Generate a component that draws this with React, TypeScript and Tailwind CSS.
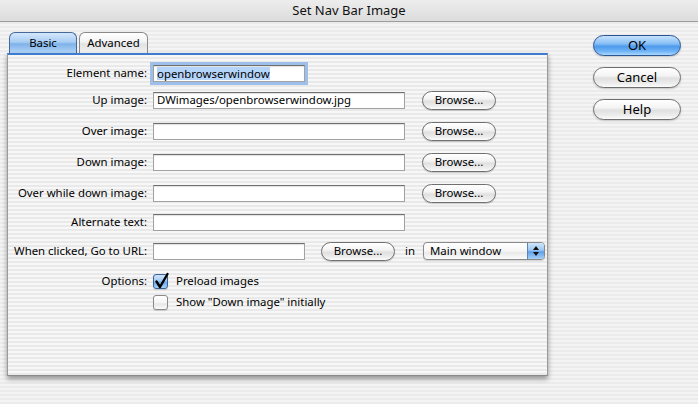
import React from "react";

const winStripe =
  "bg-[image:repeating-linear-gradient(180deg,#ebebeb_0px,#ebebeb_2px,#f4f4f4_2px,#f4f4f4_4px)]";

function Field({ w, children, focus }: { w: string; children?: React.ReactNode; focus?: boolean }) {
  return (
    <div
      className={`${w} h-[17px] bg-white border border-[#a2a2a2] border-t-[#6f6f6f] shadow-[inset_0_1px_1px_rgba(0,0,0,0.12)] flex items-center pl-[3px] leading-none ${
        focus ? "ring-[3px] ring-[#9dbfe9] border-[#7a9fd0]" : ""
      }`}
    >
      {children}
    </div>
  );
}

function AquaButton({ w, children, ml }: { w: string; children: React.ReactNode; ml?: string }) {
  return (
    <div
      className={`${w} ${ml ?? ""} h-[19px] rounded-full border border-[#707070] bg-[linear-gradient(180deg,#ffffff_0%,#f4f4f4_40%,#e0e0e0_55%,#ececec_80%,#fbfbfb_100%)] shadow-[0_1px_1px_rgba(0,0,0,0.18)] flex items-center justify-center text-[11.4px] leading-none`}
    >
      {children}
    </div>
  );
}

function Row({ label, children, mt, h = "h-[18px]" }: { label: string; children?: React.ReactNode; mt: string; h?: string }) {
  return (
    <div className={`flex items-center ${h} ${mt}`}>
      <div className="w-[139px] text-right whitespace-nowrap leading-none">{label}</div>
      <div className="ml-[6px] flex items-center">{children}</div>
    </div>
  );
}

function Checkbox({ checked }: { checked?: boolean }) {
  return (
    <div
      className={`relative w-[15px] h-[15px] rounded-[3px] border ${
        checked
          ? "border-[#3a6197] bg-[linear-gradient(180deg,#cfe5fb_0%,#a3cbf3_45%,#6aa9ea_55%,#a8d2f8_100%)]"
          : "border-[#8a8a8a] bg-[linear-gradient(180deg,#ffffff_0%,#f5f5f5_50%,#e6e6e6_60%,#fafafa_100%)]"
      } shadow-[0_1px_1px_rgba(0,0,0,0.15)]`}
    >
      {checked && (
        <svg className="absolute left-[-2px] top-[-5px]" width="20" height="21" viewBox="0 0 20 21">
          <path d="M4.5 11.5 L8 17 L15.5 4" fill="none" stroke="#000" strokeWidth="2.4" strokeLinecap="round" strokeLinejoin="round" />
        </svg>
      )}
    </div>
  );
}

function BigButton({ children, primary }: { children: React.ReactNode; primary?: boolean }) {
  return (
    <div
      className={`w-[88px] h-[21px] rounded-full border flex items-center justify-center text-[13px] leading-none shadow-[0_1px_2px_rgba(0,0,0,0.2)] ${
        primary
          ? "border-[#2b5592] bg-[linear-gradient(180deg,#c6e2fe_0%,#88bff5_40%,#4e9bec_55%,#6fb3f6_80%,#a9d8ff_100%)]"
          : "border-[#6e6e6e] bg-[linear-gradient(180deg,#ffffff_0%,#f4f4f4_40%,#e0e0e0_55%,#ececec_80%,#fbfbfb_100%)]"
      }`}
    >
      {children}
    </div>
  );
}

export default function App() {
  return (
    <div className="w-[698px] h-[404px] overflow-hidden flex flex-col font-['Noto_Sans',sans-serif] text-[11.4px] text-black">
      <div className="h-[22px] shrink-0 border-b border-[#9c9c9c] bg-[linear-gradient(180deg,#ededed,#dcdcdc)] flex items-center justify-center text-[13px] text-[#111] leading-none">
        Set Nav Bar Image
      </div>
      <div className={`flex-1 flex ${winStripe}`}>
        <div className="ml-[7px] mt-[10px] w-[541px] flex flex-col">
          <div className="flex h-[21px] pl-[2px] items-end gap-[2px]">
            <div className="w-[68px] h-[21px] rounded-t-[6px] border border-b-0 border-[#46699b] bg-[linear-gradient(180deg,#d4e7fb_0%,#a9cdf3_45%,#7fb2ea_55%,#b2d5f7_100%)] flex items-center justify-center leading-none">
              Basic
            </div>
            <div className="w-[69px] h-[21px] rounded-t-[6px] border border-b-0 border-[#8a8a8a] bg-[linear-gradient(180deg,#ffffff_0%,#f3f3f3_45%,#e2e2e2_55%,#f2f2f2_100%)] flex items-center justify-center leading-none">
              Advanced
            </div>
          </div>
          <div className="h-[323px] border-t-2 border-t-[#3f7cd0] border-x border-x-[#9a9a9a] border-b border-b-[#8a8a8a] bg-[image:repeating-linear-gradient(180deg,#f7f7f7_0px,#f7f7f7_2px,#e9e9e9_2px,#e9e9e9_4px)] shadow-[0_3px_5px_rgba(0,0,0,0.4)] flex flex-col">
            <Row label="Element name:" mt="mt-[9px]">
              <Field w="w-[152px]" focus>
                <span className="bg-[#b5d4fa] leading-[13px]">openbrowserwindow</span>
              </Field>
            </Row>
            <Row label="Up image:" mt="mt-[9px]">
              <Field w="w-[252px]">DWimages/openbrowserwindow.jpg</Field>
              <AquaButton w="w-[74px]" ml="ml-[17px]">Browse...</AquaButton>
            </Row>
            <Row label="Over image:" mt="mt-[13px]">
              <Field w="w-[252px]" />
              <AquaButton w="w-[74px]" ml="ml-[17px]">Browse...</AquaButton>
            </Row>
            <Row label="Down image:" mt="mt-[13px]">
              <Field w="w-[252px]" />
              <AquaButton w="w-[74px]" ml="ml-[17px]">Browse...</AquaButton>
            </Row>
            <Row label="Over while down image:" mt="mt-[13px]">
              <Field w="w-[252px]" />
              <AquaButton w="w-[74px]" ml="ml-[17px]">Browse...</AquaButton>
            </Row>
            <Row label="Alternate text:" mt="mt-[11px]">
              <Field w="w-[252px]" />
            </Row>
            <Row label="When clicked, Go to URL:" mt="mt-[11px]">
              <Field w="w-[152px]" />
              <AquaButton w="w-[74px]" ml="ml-[16px]">Browse...</AquaButton>
              <span className="ml-[10px] leading-none">in</span>
              <div className="ml-[8px] w-[122px] h-[18px] rounded-[4px] border border-[#8a8a8a] bg-[linear-gradient(180deg,#ffffff_0%,#f6f6f6_50%,#e9e9e9_60%,#fbfbfb_100%)] flex items-center shadow-[0_1px_1px_rgba(0,0,0,0.15)]">
                <span className="flex-1 pl-[6px] leading-none">Main window</span>
                <div className="w-[17px] h-full rounded-r-[3px] border-l border-[#5c84bb] bg-[linear-gradient(180deg,#d0e6fc_0%,#9cc7f2_45%,#5fa0e8_55%,#a6d0f8_100%)] flex flex-col items-center justify-center gap-[2px]">
                  <svg width="6" height="4" viewBox="0 0 6 4"><path d="M3 0 L6 4 L0 4 Z" fill="#111" /></svg>
                  <svg width="6" height="4" viewBox="0 0 6 4"><path d="M0 0 L6 0 L3 4 Z" fill="#111" /></svg>
                </div>
              </div>
            </Row>
            <Row label="Options:" mt="mt-[13px]" h="h-[16px]">
              <Checkbox checked />
              <span className="ml-[8px] leading-none">Preload images</span>
            </Row>
            <Row label="" mt="mt-[5px]" h="h-[16px]">
              <Checkbox />
              <span className="ml-[8px] leading-none">Show "Down image" initially</span>
            </Row>
          </div>
        </div>
        <div className="ml-[45px] mt-[13px] flex flex-col gap-[11px]">
          <BigButton primary>OK</BigButton>
          <BigButton>Cancel</BigButton>
          <BigButton>Help</BigButton>
        </div>
      </div>
    </div>
  );
}
